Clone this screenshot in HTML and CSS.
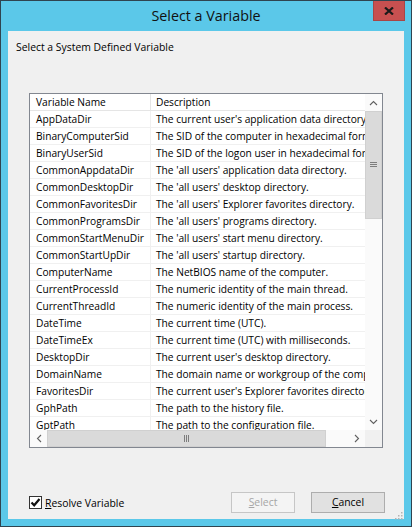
FILE: index.html
```html
<!DOCTYPE html>
<html>
<head>
<meta charset="utf-8">
<link rel="stylesheet" href="styles.css">
</head>
<body>
<div class="window">
  <div class="titlebar">
    <span class="spacer"></span>
    <div class="title">Select a Variable</div>
    <div class="close-wrap">
      <div class="close">
        <svg width="10" height="8" viewBox="0 0 10 8"><path d="M1 0.5 L9 7.5 M9 0.5 L1 7.5" stroke="#1a1a1a" stroke-width="2.2" fill="none"/></svg>
      </div>
    </div>
  </div>
  <div class="client">
    <div class="caption">Select a System Defined Variable</div>
    <div class="listbox">
      <div class="view">
        <div class="row head"><div class="c1">Variable Name</div><div class="c2">Description</div></div>
        <div class="row"><div class="c1">AppDataDir</div><div class="c2">The current user's application data directory.</div></div>
        <div class="row"><div class="c1">BinaryComputerSid</div><div class="c2">The SID of the computer in hexadecimal format.</div></div>
        <div class="row"><div class="c1">BinaryUserSid</div><div class="c2">The SID of the logon user in hexadecimal format.</div></div>
        <div class="row"><div class="c1">CommonAppdataDir</div><div class="c2">The 'all users' application data directory.</div></div>
        <div class="row"><div class="c1">CommonDesktopDir</div><div class="c2">The 'all users' desktop directory.</div></div>
        <div class="row"><div class="c1">CommonFavoritesDir</div><div class="c2">The 'all users' Explorer favorites directory.</div></div>
        <div class="row"><div class="c1">CommonProgramsDir</div><div class="c2">The 'all users' programs directory.</div></div>
        <div class="row"><div class="c1">CommonStartMenuDir</div><div class="c2">The 'all users' start menu directory.</div></div>
        <div class="row"><div class="c1">CommonStartUpDir</div><div class="c2">The 'all users' startup directory.</div></div>
        <div class="row"><div class="c1">ComputerName</div><div class="c2">The NetBIOS name of the computer.</div></div>
        <div class="row"><div class="c1">CurrentProcessId</div><div class="c2">The numeric identity of the main thread.</div></div>
        <div class="row"><div class="c1">CurrentThreadId</div><div class="c2">The numeric identity of the main process.</div></div>
        <div class="row"><div class="c1">DateTime</div><div class="c2">The current time (UTC).</div></div>
        <div class="row"><div class="c1">DateTimeEx</div><div class="c2">The current time (UTC) with milliseconds.</div></div>
        <div class="row"><div class="c1">DesktopDir</div><div class="c2">The current user's desktop directory.</div></div>
        <div class="row"><div class="c1">DomainName</div><div class="c2">The domain name or workgroup of the computer.</div></div>
        <div class="row"><div class="c1">FavoritesDir</div><div class="c2">The current user's Explorer favorites directory.</div></div>
        <div class="row"><div class="c1">GphPath</div><div class="c2">The path to the history file.</div></div>
        <div class="row"><div class="c1">GptPath</div><div class="c2">The path to the configuration file.</div></div>
      </div>
      <div class="vscroll">
        <div class="arrow"><svg width="9" height="6" viewBox="0 0 9 6"><path d="M1 5 L4.5 1.5 L8 5" stroke="#606060" stroke-width="1.1" fill="none"/></svg></div>
        <div class="vthumb"><svg width="7" height="6" viewBox="0 0 7 6"><path d="M0 0.5 H7 M0 2.5 H7 M0 4.5 H7" stroke="#7d7d7d" stroke-width="1"/></svg></div>
        <div class="vtrack"></div>
        <div class="arrow"><svg width="9" height="6" viewBox="0 0 9 6"><path d="M1 1 L4.5 4.5 L8 1" stroke="#606060" stroke-width="1.1" fill="none"/></svg></div>
      </div>
      <div class="hscroll">
        <div class="arrow"><svg width="6" height="9" viewBox="0 0 6 9"><path d="M5 1 L1.5 4.5 L5 8" stroke="#606060" stroke-width="1.1" fill="none"/></svg></div>
        <div class="hthumb"><svg width="6" height="7" viewBox="0 0 6 7"><path d="M0.5 0 V7 M2.5 0 V7 M4.5 0 V7" stroke="#7d7d7d" stroke-width="1"/></svg></div>
        <div class="htrack"></div>
        <div class="arrow"><svg width="6" height="9" viewBox="0 0 6 9"><path d="M1 1 L4.5 4.5 L1 8" stroke="#606060" stroke-width="1.1" fill="none"/></svg></div>
      </div>
      <div class="corner"></div>
    </div>
    <div class="footer">
      <div class="check">
        <span class="box"><svg width="11" height="11" viewBox="0 0 11 11"><path d="M1.5 5.5 L4.2 8.3 L9.5 2" stroke="#111" stroke-width="2.2" fill="none"/></svg></span>
        <span class="check-label"><u>R</u>esolve Variable</span>
      </div>
      <div class="buttons">
        <div class="btn disabled"><u>S</u>elect</div>
        <div class="btn"><u>C</u>ancel</div>
      </div>
    </div>
    <div class="grip"><svg width="8" height="8" viewBox="0 0 8 8" fill="#b4b4b4"><rect x="6" y="0" width="1.5" height="1.5"/><rect x="3" y="3" width="1.5" height="1.5"/><rect x="6" y="3" width="1.5" height="1.5"/><rect x="0" y="6" width="1.5" height="1.5"/><rect x="3" y="6" width="1.5" height="1.5"/><rect x="6" y="6" width="1.5" height="1.5"/></svg></div>
  </div>
</div>
</body>
</html>
```

FILE: styles.css
```css
html, body {
  margin: 0;
  padding: 0;
  background: #5bc8e9;
}

.window {
  box-sizing: border-box;
  width: 412px;
  height: 527px;
  border: 1px solid #2f4450;
  background: #5bc8e9;
  display: flex;
  flex-direction: column;
  font-family: "Open Sans", "Noto Sans", sans-serif;
  font-size: 10.4px;
  color: #000;
}

.titlebar {
  height: 30px;
  display: grid;
  grid-template-columns: 1fr auto 1fr;
  align-items: center;
}

.title {
  font-size: 14.3px;
  color: #111;
  line-height: 30px;
}

.close-wrap {
  align-self: start;
  justify-self: end;
  margin-right: 6px;
}

.close {
  width: 32px;
  height: 20px;
  box-sizing: border-box;
  background: #c75050;
  border: 1px solid #a94545;
  border-top: none;
  display: flex;
  align-items: center;
  justify-content: center;
}

.client {
  position: relative;
  flex: 1;
  margin: 0 7px 7px 7px;
  background: #f0f0f0;
  display: flex;
  flex-direction: column;
}

.caption {
  margin-top: 9px;
  padding-left: 8px;
  line-height: 14px;
}

.listbox {
  margin-top: 39px;
  margin-left: 21px;
  width: 354px;
  height: 355px;
  box-sizing: border-box;
  border: 1px solid #828790;
  background: #fff;
  display: grid;
  grid-template-columns: 335px 17px;
  grid-template-rows: 336px 17px;
}

.view {
  overflow: hidden;
  font-size: 10.2px;
}

.row {
  display: grid;
  grid-template-columns: 121px 1fr;
  height: 17px;
  box-sizing: border-box;
  border-bottom: 1px solid #f0f0f0;
  line-height: 17px;
  white-space: nowrap;
}

.row.head {
  border-bottom: 1px solid #e5e5e5;
}

.c1 {
  padding-left: 6px;
  border-right: 1px solid #f0f0f0;
  overflow: hidden;
}

.head .c1 {
  border-right: 1px solid #e5e5e5;
}

.c2 {
  padding-left: 5px;
  overflow: hidden;
}

.vscroll {
  display: flex;
  flex-direction: column;
  background: #fafafa;
}

.hscroll {
  display: flex;
  background: #fafafa;
}

.arrow {
  width: 17px;
  height: 17px;
  flex: none;
  display: flex;
  align-items: center;
  justify-content: center;
}

.vthumb {
  height: 108px;
  flex: none;
  box-sizing: border-box;
  background: #dadada;
  border: 1px solid #d0d0d0;
  display: flex;
  align-items: center;
  justify-content: center;
}

.vtrack, .htrack {
  flex: 1;
}

.hthumb {
  width: 279px;
  flex: none;
  box-sizing: border-box;
  background: #dadada;
  border: 1px solid #d0d0d0;
  display: flex;
  align-items: center;
  justify-content: center;
}

.corner {
  background: #f0f0f0;
}

.footer {
  margin-top: auto;
  padding: 0 19px 6px 21px;
  display: flex;
  align-items: center;
  justify-content: space-between;
}

.check {
  display: flex;
  align-items: center;
  gap: 3px;
}

.box {
  width: 13px;
  height: 13px;
  box-sizing: border-box;
  border: 1px solid #333;
  background: #fff;
  display: flex;
  align-items: center;
  justify-content: center;
}

.check-label {
  line-height: 14px;
}

.buttons {
  display: flex;
  gap: 16px;
}

.btn {
  width: 74px;
  height: 21px;
  box-sizing: border-box;
  border: 1px solid #adadad;
  background: #e1e1e1;
  text-align: center;
  line-height: 19px;
}

.btn.disabled {
  width: 64px;
  border-color: #c6c6c6;
  background: #f4f4f4;
  color: #a6a6a6;
}

.grip {
  position: absolute;
  right: 1px;
  bottom: 2px;
  width: 8px;
  height: 8px;
}
```
